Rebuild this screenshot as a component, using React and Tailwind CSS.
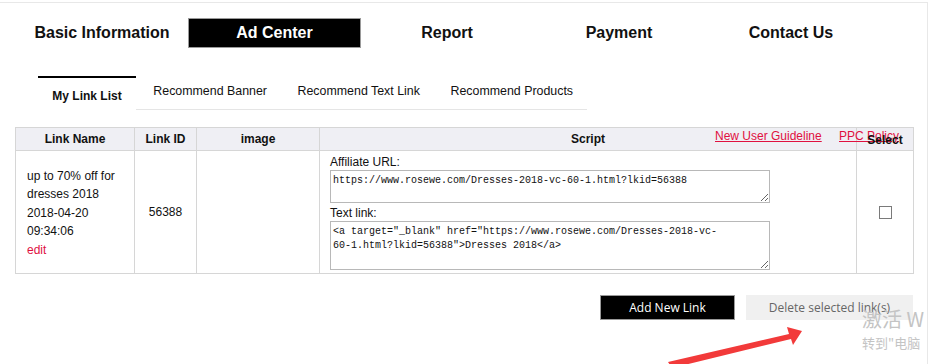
export default function App() {
  const navItems = ["Basic Information", "Ad Center", "Report", "Payment", "Contact Us"];
  const subTabs = ["Recommend Banner", "Recommend Text Link", "Recommend Products"];
  return (
    <div className="w-[929px] h-[364px] bg-white overflow-hidden relative font-['Liberation_Sans',Arial,sans-serif] text-[#111]">
      <div className="mt-[2px] w-[928px] h-[400px] border-t border-r border-[#e8e8e8]">
        {/* main nav */}
        <div className="flex pl-[16px] pt-[15px]">
          {navItems.map((n) =>
            n === "Ad Center" ? (
              <div key={n} className="w-[173px] h-[30px] flex items-center justify-center bg-black text-white border border-[#9a9a9a] text-[16px] font-bold">
                {n}
              </div>
            ) : (
              <div key={n} className="w-[172px] h-[30px] flex items-center justify-center text-[16px] font-bold">
                {n}
              </div>
            )
          )}
        </div>

        {/* sub tabs */}
        <div className="ml-[38px] mt-[28px] w-[549px] h-[34px] flex border-b border-[#e5e5e5] whitespace-nowrap">
          <div className="shrink-0 w-[98px] h-[35px] border-t-2 border-black bg-white flex items-center justify-center pt-[3px] text-[12px] font-bold">
            My Link List
          </div>
          <div className="flex pl-[2px]">
            {subTabs.map((t) => (
              <div key={t} className="shrink-0 px-[15.3px] flex items-center pb-[3px] text-[12.4px]">
                {t}
              </div>
            ))}
          </div>
        </div>

        {/* table */}
        <div className="relative ml-[15px] mt-[17px] w-[898px]">
          <table className="border-collapse table-fixed w-[898px] text-[12px]">
            <colgroup>
              <col className="w-[119px]" />
              <col className="w-[62px]" />
              <col className="w-[123px]" />
              <col className="w-[537px]" />
              <col className="w-[57px]" />
            </colgroup>
            <thead>
              <tr className="h-[23px] bg-[#efeff4]">
                {["Link Name", "Link ID", "image", "Script"].map((h) => (
                  <th key={h} className="border border-[#d6d6d6] font-bold text-center p-0">
                    {h}
                  </th>
                ))}
                <th className="border border-[#d6d6d6] font-bold text-center p-0 relative z-10 pt-[2px]">Select</th>
              </tr>
            </thead>
            <tbody>
              <tr className="h-[123px]">
                <td className="border border-[#d6d6d6] pl-[11px] align-middle leading-[18.5px] pt-[2px]">
                  <div>up to 70% off for</div>
                  <div>dresses 2018</div>
                  <div>2018-04-20</div>
                  <div>09:34:06</div>
                  <div className="text-[#e0103f]">edit</div>
                </td>
                <td className="border border-[#d6d6d6] text-center">56388</td>
                <td className="border border-[#d6d6d6]"></td>
                <td className="border border-[#d6d6d6] pl-[10px] align-top pt-[4px]">
                  <div className="leading-[14px]">Affiliate URL:</div>
                  <textarea
                    readOnly
                    className="block w-[440px] h-[33px] mt-[1px] border border-[#b8b8b8] px-[2px] pt-[3px] pb-0 font-['Liberation_Mono',monospace] text-[10px] leading-[13px] text-[#111] outline-none"
                    defaultValue="https://www.rosewe.com/Dresses-2018-vc-60-1.html?lkid=56388"
                  />
                  <div className="leading-[14px] mt-[3px]">Text link:</div>
                  <textarea
                    readOnly
                    className="block w-[440px] h-[49px] mt-[1px] border border-[#b8b8b8] px-[2px] pt-[3px] pb-0 font-['Liberation_Mono',monospace] text-[10px] leading-[14px] text-[#111] outline-none"
                    defaultValue={'<a target="_blank" href="https://www.rosewe.com/Dresses-2018-vc-\n60-1.html?lkid=56388">Dresses 2018</a>'}
                  />
                </td>
                <td className="border border-[#d6d6d6] text-center align-middle">
                  <input type="checkbox" className="appearance-none w-[13px] h-[13px] border border-[#7a7a7a] bg-white align-middle" />
                </td>
              </tr>
            </tbody>
          </table>
          <a className="absolute left-[700px] top-[0px] text-[12px] text-[#e0103f] underline">New User Guideline</a>
          <a className="absolute left-[824px] top-[0px] text-[12px] text-[#e0103f] underline">PPC Policy</a>

          {/* buttons */}
          <div className="flex justify-end gap-[11px] mt-[21px] font-['Open_Sans','Noto_Sans',sans-serif] text-[12px]">
            <button className="w-[135px] h-[25px] bg-black text-white border border-[#9a9a9a]">Add New Link</button>
            <button className="w-[167px] h-[25px] bg-[#f0f0f0] text-[#666]">Delete selected link(s)</button>
          </div>
        </div>
      </div>

      {/* windows activation watermark */}
      <div className="absolute left-[862px] top-[305px] text-[20px] text-[#c4c4c4] font-['Noto_Sans_CJK_SC',sans-serif] whitespace-nowrap leading-[28px]">激活 W</div>
      <div className="absolute left-[862px] top-[333px] text-[13px] text-[#c4c4c4] font-['Noto_Sans_CJK_SC',sans-serif] whitespace-nowrap">转到"电脑</div>

      {/* red arrow */}
      <svg className="absolute left-0 top-0 pointer-events-none" width="929" height="364" viewBox="0 0 929 364">
        <polygon points="802,331 787,327 789,334 668,362 672,368 791,339 793,345" fill="#f23a3a" />
      </svg>
    </div>
  );
}
